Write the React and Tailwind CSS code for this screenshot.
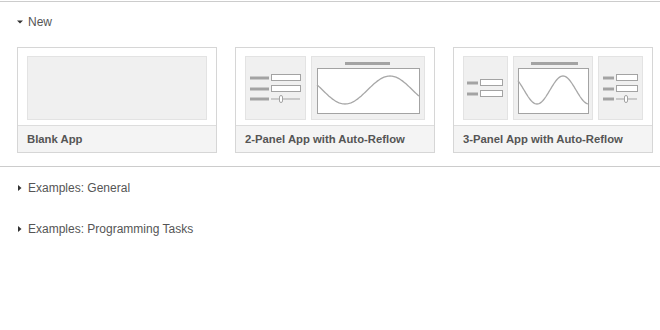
import React from "react";

const font = { fontFamily: '"Liberation Sans", Arial, sans-serif' };

function Caret({ open }) {
  return (
    <svg width="6" height="6" viewBox="0 0 6 6" className="shrink-0">
      {open ? (
        <polygon points="0,1.5 6,1.5 3,4.5" fill="#333" />
      ) : (
        <polygon points="1,0 4.5,3 1,6" fill="#333" />
      )}
    </svg>
  );
}

function ControlRows({ rows, dash, box }) {
  // rows: list of [y, kind]
  return (
    <svg width="100%" height="62" className="block">
      {rows.map(([y, kind], i) => (
        <g key={i}>
          <rect x={dash[0]} y={y - 1.5} width={dash[1] - dash[0]} height="3" fill="#a3a3a3" />
          {kind === "box" ? (
            <rect x={box[0] + 0.5} y={y - 3.5} width={box[1] - box[0]} height="6" fill="#fff" stroke="#a3a3a3" />
          ) : (
            <g>
              <line x1={box[0]} y1={y} x2={box[1]} y2={y} stroke="#a3a3a3" />
              <rect x={box[0] + 8.5} y={y - 3.5} width="3" height="7" rx="1.5" fill="#fff" stroke="#a3a3a3" />
            </g>
          )}
        </g>
      ))}
    </svg>
  );
}

function Plot({ bar, box, minX, maxX }) {
  const pts = [];
  const half = maxX - minX;
  for (let x = box[0]; x <= box[2]; x += 1) {
    const y = 33 + 14 * Math.cos(((x - minX) / half) * Math.PI);
    pts.push(`${x},${y.toFixed(2)}`);
  }
  return (
    <svg width="100%" height="62" className="block">
      <rect x={bar[0]} y="5" width={bar[1] - bar[0]} height="3" fill="#a3a3a3" />
      <rect x={box[0] + 0.5} y={box[1] + 0.5} width={box[2] - box[0]} height={box[3] - box[1]} fill="#fff" stroke="#a3a3a3" />
      <polyline points={pts.join(" ")} fill="none" stroke="#a8a8a8" strokeWidth="1.3" />
    </svg>
  );
}

function Panel({ className, children }) {
  return (
    <div className={`h-[62px] bg-[#f0f0f0] border border-[#e3e3e3] box-content ${className}`}>
      {children}
    </div>
  );
}

function Card({ label, children }) {
  return (
    <div className="w-[200px] h-[106px] border border-[#d6d6d6] flex flex-col bg-white">
      <div className="px-[9px] pt-[8px] flex gap-[5px]">{children}</div>
      <div className="mt-auto h-[27px] border-t border-[#dddddd] bg-[#f4f4f4] px-[9px] flex items-center text-[11.3px] font-bold text-[#555]">
        {label}
      </div>
    </div>
  );
}

export default function App() {
  return (
    <div className="w-[660px] h-[330px] bg-white text-[12px] text-[#555]" style={font}>
      <div className="mt-px border-t border-[#cccccc] px-[17px] pt-[12px] pb-[13px] border-b">
        <div className="flex items-center gap-[5px] h-4">
          <Caret open />
          <span>New</span>
        </div>
        <div className="mt-[17px] flex gap-[18px]">
          <Card label="Blank App">
            <Panel className="w-[178px]" />
          </Card>
          <Card label="2-Panel App with Auto-Reflow">
            <Panel className="w-[59px]">
              <ControlRows
                rows={[[21, "box"], [32, "box"], [42, "slider"]]}
                dash={[4, 23]}
                box={[25, 54]}
              />
            </Panel>
            <Panel className="w-[112px]">
              <Plot bar={[33, 78]} box={[5, 11, 107, 56]} minX={33} maxX={78} />
            </Panel>
          </Card>
          <Card label="3-Panel App with Auto-Reflow">
            <Panel className="w-[43px]">
              <ControlRows rows={[[26, "box"], [37, "box"]]} dash={[3, 14]} box={[16, 38]} />
            </Panel>
            <Panel className="w-[79px]">
              <Plot bar={[17, 64]} box={[4, 11, 74, 56]} minX={23} maxX={49} />
            </Panel>
            <Panel className="w-[43px]">
              <ControlRows
                rows={[[21, "box"], [32, "box"], [42, "slider"]]}
                dash={[4, 15]}
                box={[17, 38]}
              />
            </Panel>
          </Card>
        </div>
      </div>
      <div className="px-[17px] pt-[13px] flex flex-col gap-[25px]">
        <div className="flex items-center gap-[5px] h-4">
          <Caret />
          <span>Examples: General</span>
        </div>
        <div className="flex items-center gap-[5px] h-4">
          <Caret />
          <span>Examples: Programming Tasks</span>
        </div>
      </div>
    </div>
  );
}
